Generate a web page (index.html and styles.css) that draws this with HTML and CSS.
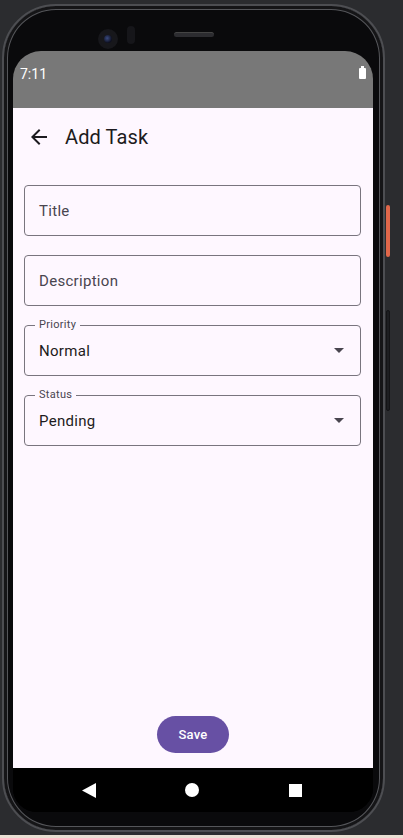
FILE: index.html
```html
<!DOCTYPE html>
<html>
<head>
<meta charset="utf-8">
<link rel="stylesheet" href="styles.css">
</head>
<body>
<div class="device">
  <div class="camera"><span class="lens"></span></div>
  <div class="sensor"></div>
  <div class="speaker"></div>
  <div class="btn-power"></div>
  <div class="btn-volume"></div>
  <div class="screen">
    <div class="statusbar">
      <span class="time">7:11</span>
      <span class="battery"></span>
    </div>
    <div class="app">
      <div class="appbar">
        <svg class="back" viewBox="0 0 24 24" width="24" height="24"><path d="M20 11H7.83l5.59-5.59L12 4l-8 8 8 8 1.41-1.41L7.83 13H20v-2z" fill="#1d1b20"/></svg>
        <span class="title">Add Task</span>
      </div>
      <div class="form">
        <div class="field"><span class="placeholder">Title</span></div>
        <div class="field"><span class="placeholder">Description</span></div>
        <div class="field select">
          <span class="float">Priority</span>
          <span class="value">Normal</span>
          <svg class="caret" viewBox="0 0 10 5" width="10" height="5"><path d="M0 0h10L5 5z" fill="#49454f"/></svg>
        </div>
        <div class="field select">
          <span class="float">Status</span>
          <span class="value">Pending</span>
          <svg class="caret" viewBox="0 0 10 5" width="10" height="5"><path d="M0 0h10L5 5z" fill="#49454f"/></svg>
        </div>
      </div>
      <button class="save">Save</button>
    </div>
    <div class="navbar">
      <svg width="14" height="15" viewBox="0 0 14 15"><path d="M14 0v15L0 7.5z" fill="#fff"/></svg>
      <span class="home"></span>
      <span class="recents"></span>
    </div>
  </div>
</div>
<div class="floor"></div>
</body>
</html>
```
FILE: styles.css
```css
* { box-sizing: border-box; }
html, body { margin: 0; padding: 0; }
body {
  width: 403px;
  height: 838px;
  overflow: hidden;
  background: #2b2c2f;
  font-family: Roboto, "Noto Sans", sans-serif;
  padding-top: 4px;
  padding-left: 2px;
  position: relative;
}
.device {
  position: relative;
  width: 383px;
  height: 828px;
  border-radius: 54px;
  background: #0a0a0c;
  border: 2px solid #4d4e52;
  box-shadow: inset 0 0 0 3px #151517, inset 0 0 0 4px #55565a;
  padding: 45px 10px 18px 9px;
}
.camera {
  position: absolute;
  left: 94px;
  top: 23px;
  width: 20px;
  height: 20px;
  border-radius: 50%;
  background: #17171b;
  display: flex;
  align-items: center;
  justify-content: center;
}
.lens {
  width: 8px;
  height: 8px;
  border-radius: 50%;
  background: radial-gradient(circle at 40% 40%, #3a4a80, #0d0f1e 70%);
}
.sensor {
  position: absolute;
  left: 123px;
  top: 20px;
  width: 8px;
  height: 18px;
  border-radius: 4px;
  background: #16161a;
}
.speaker {
  position: absolute;
  left: 170px;
  top: 26px;
  width: 40px;
  height: 5px;
  border-radius: 3px;
  background: #2c2c30;
  border-top: 1px solid #444;
}
.btn-power {
  position: absolute;
  left: 382px;
  top: 199px;
  width: 4px;
  height: 52px;
  border-radius: 2px;
  background: #e0674a;
}
.btn-volume {
  position: absolute;
  left: 382px;
  top: 304px;
  width: 4px;
  height: 101px;
  border-radius: 2px;
  background: #1d1e21;
  border: 1px solid #141416;
}
.screen {
  width: 360px;
  height: 761px;
  border-radius: 28px 28px 24px 24px;
  overflow: hidden;
  display: flex;
  flex-direction: column;
  background: #000;
}
.statusbar {
  height: 57px;
  flex: none;
  background: #787878;
  display: flex;
  justify-content: space-between;
  align-items: flex-start;
  padding: 15px 7px 0 7px;
  color: #fff;
  font-size: 14px;
}
.battery {
  width: 7px;
  height: 11px;
  margin-top: 2px;
  background: #fff;
  border-radius: 1px;
  position: relative;
}
.battery::before {
  content: "";
  position: absolute;
  left: 2px;
  top: -2px;
  width: 3px;
  height: 2px;
  background: #fff;
}
.app {
  height: 660px;
  flex: none;
  background: #fef7ff;
  display: flex;
  flex-direction: column;
}
.appbar {
  height: 64px;
  display: flex;
  align-items: center;
  padding-left: 14px;
  padding-bottom: 6px;
}
.back { flex: none; }
.title {
  margin-left: 14px;
  font-size: 20px;
  color: #1d1b20;
  letter-spacing: 0.1px;
}
.form {
  padding: 13px 12px 0 11px;
  display: flex;
  flex-direction: column;
  gap: 19px;
}
.field {
  position: relative;
  height: 51px;
  border: 1px solid #79747e;
  border-radius: 4px;
  display: flex;
  align-items: center;
  padding: 0 14px;
  font-size: 15px;
}
.placeholder { color: #49454f; letter-spacing: 0.3px; }
.value { color: #1d1b20; flex: 1; letter-spacing: 0.3px; }
.float {
  position: absolute;
  left: 10px;
  top: -8px;
  padding: 0 4px;
  font-size: 11px;
  color: #49454f;
  background: #fef7ff;
  line-height: 14px;
  letter-spacing: 0.3px;
}
.caret { margin-right: 2px; }
.save {
  margin: auto auto 15px;
  width: 72px;
  height: 37px;
  border: none;
  border-radius: 19px;
  background: #6750a4;
  color: #fff;
  font-family: Roboto, sans-serif;
  font-size: 13px;
  font-weight: 500;
  letter-spacing: 0.2px;
}
.navbar {
  height: 44px;
  flex: none;
  background: #000;
  display: flex;
  align-items: center;
  padding-left: 69px;
}
.navbar svg { flex: none; }
.home {
  width: 14px;
  height: 14px;
  border-radius: 50%;
  background: #fff;
  margin-left: 89px;
}
.recents {
  width: 13px;
  height: 13px;
  background: #fff;
  margin-left: 90px;
}
.floor {
  position: absolute;
  left: 0;
  bottom: 0;
  width: 403px;
  height: 3px;
  background: #e9dfd3;
}
```
